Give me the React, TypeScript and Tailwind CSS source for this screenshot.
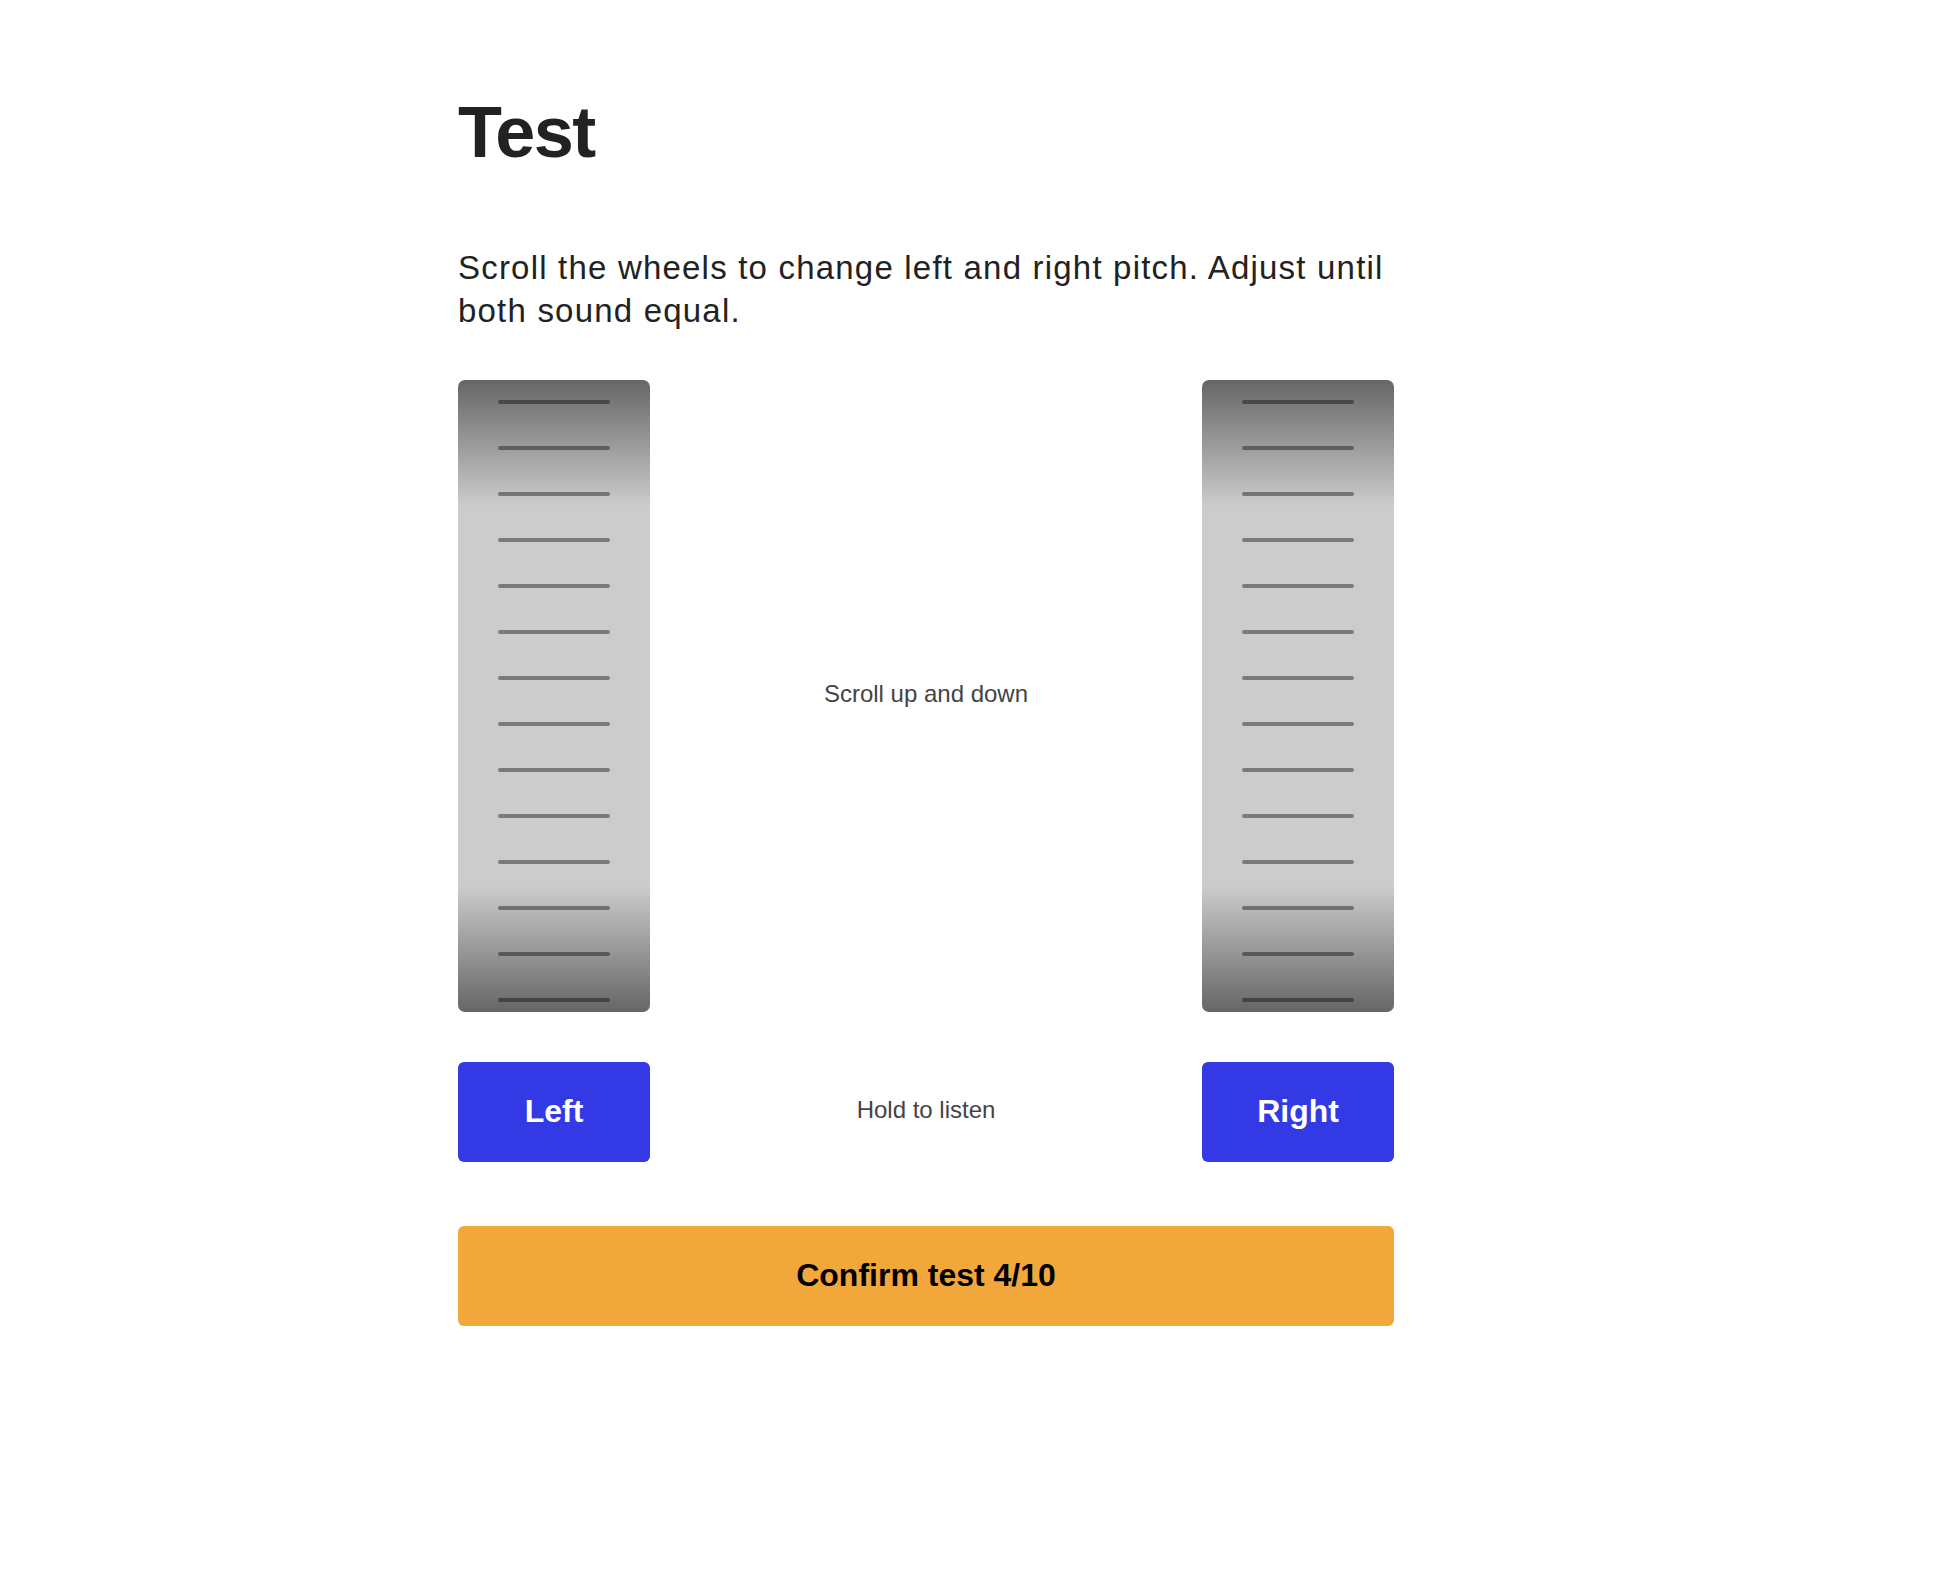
import React from "react";

function Wheel() {
  const ticks = Array.from({ length: 14 });
  return (
    <div className="w-[192px] h-[632px] rounded-[7px] bg-[linear-gradient(to_bottom,#666666_0%,#cccccc_20%,#cccccc_80%,#666666_100%)] flex flex-col items-center pt-[20px] gap-[42px] overflow-hidden">
      {ticks.map((_, i) => (
        <div key={i} className="w-[112px] h-[4px] rounded-full bg-[rgba(0,0,0,0.4)] shrink-0" />
      ))}
    </div>
  );
}

export default function App() {
  return (
    <div className="min-h-[1576px] bg-white font-['Liberation_Sans',Arial,sans-serif]">
      <div className="ml-[458px] w-[936px] pt-[96px]">
        <h1 className="text-[72px] leading-[72px] font-bold text-[#222222] tracking-[-1.5px]">Test</h1>
        <p className="mt-[78px] text-[33px] leading-[43px] text-[#222222] tracking-[1.2px]">
          Scroll the wheels to change left and right pitch. Adjust until both sound equal.
        </p>
        <div className="mt-[48px] flex items-center justify-between">
          <Wheel />
          <div className="flex-1 text-center text-[24px] leading-[28px] text-[#444444] -mt-[5px]">Scroll up and down</div>
          <Wheel />
        </div>
        <div className="mt-[50px] flex items-center justify-between">
          <button className="w-[192px] h-[100px] rounded-[6px] bg-[#3439e6] text-white text-[32px] font-bold pb-[2px]">Left</button>
          <div className="flex-1 text-center text-[24px] leading-[28px] text-[#444444] -mt-[5px]">Hold to listen</div>
          <button className="w-[192px] h-[100px] rounded-[6px] bg-[#3439e6] text-white text-[32px] font-bold pb-[2px]">Right</button>
        </div>
        <button className="mt-[64px] w-full h-[100px] rounded-[6px] bg-[#f2a73b] text-black text-[32px] font-bold pb-[3px]">
          Confirm test 4/10
        </button>
      </div>
    </div>
  );
}
